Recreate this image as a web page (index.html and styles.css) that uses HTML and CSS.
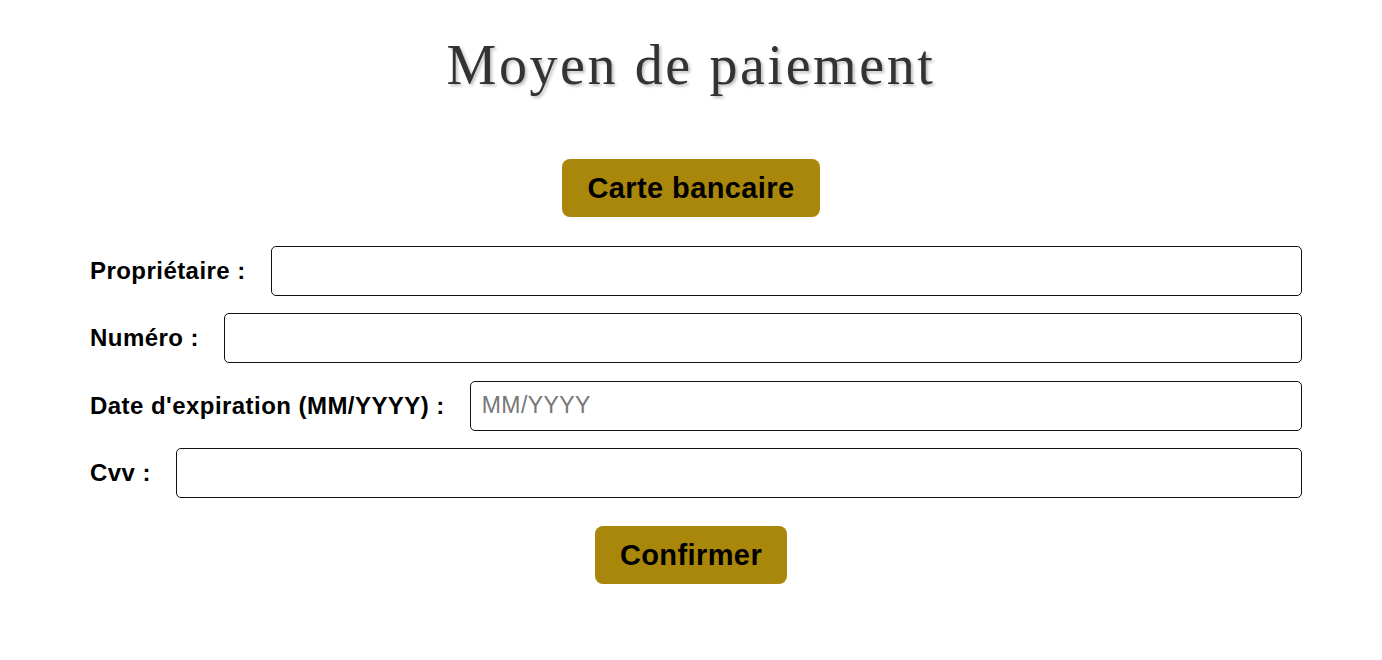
FILE: index.html
```html
<!DOCTYPE html>
<html lang="fr">
<head>
<meta charset="utf-8">
<title>Moyen de paiement</title>
<link rel="stylesheet" href="styles.css">
</head>
<body>
<main class="page">
  <h1 class="title">Moyen de paiement</h1>
  <div class="tabs">
    <button class="btn" type="button">Carte bancaire</button>
  </div>
  <form class="form">
    <div class="row">
      <label class="label" for="owner">Propriétaire :</label>
      <input class="field" id="owner" type="text">
    </div>
    <div class="row">
      <label class="label" for="number">Numéro :</label>
      <input class="field" id="number" type="text">
    </div>
    <div class="row">
      <label class="label" for="exp">Date d'expiration (MM/YYYY) :</label>
      <input class="field" id="exp" type="text" placeholder="MM/YYYY">
    </div>
    <div class="row">
      <label class="label" for="cvv">Cvv :</label>
      <input class="field" id="cvv" type="text">
    </div>
    <div class="actions">
      <button class="btn" type="button">Confirmer</button>
    </div>
  </form>
</main>
</body>
</html>
```
FILE: styles.css
```css
* { box-sizing: border-box; }
html, body { margin: 0; padding: 0; background: #fff; }
body {
  font-family: "Liberation Sans", Arial, sans-serif;
  letter-spacing: 0.4px;
  color: #000;
}
.page {
  padding: 34px 80px 0 80px;
  display: flex;
  flex-direction: column;
}
.title {
  margin: 0;
  text-align: center;
  font-family: "Liberation Serif", "Times New Roman", serif;
  font-weight: normal;
  font-size: 56px;
  line-height: 62px;
  letter-spacing: 2.6px;
  color: #333;
  text-shadow: 2px 2px 3px rgba(0, 0, 0, 0.25);
}
.tabs {
  display: flex;
  justify-content: center;
  margin-top: 63px;
}
.btn {
  font-family: "Liberation Sans", Arial, sans-serif;
  font-weight: bold;
  font-size: 29px;
  line-height: 32px;
  letter-spacing: 0.4px;
  color: #000;
  background: #a9870a;
  border: none;
  border-radius: 8px;
  padding: 13px 25px;
  cursor: pointer;
}
.form {
  margin-top: 29px;
  display: flex;
  flex-direction: column;
  gap: 17.33px;
}
.row {
  display: flex;
  align-items: center;
  gap: 25px;
  margin-left: 10px;
}
.label {
  font-weight: bold;
  font-size: 24px;
  letter-spacing: 0.45px;
  white-space: nowrap;
}
.field {
  flex: 1;
  height: 50px;
  border: 1px solid #111;
  border-radius: 5px;
  padding: 0 11px;
  font-family: "Liberation Sans", Arial, sans-serif;
  font-size: 23px;
  letter-spacing: 0.4px;
  background: #fff;
}
.field::placeholder { color: #777; }
.actions {
  display: flex;
  justify-content: center;
  margin-top: 10.67px;
}
```
